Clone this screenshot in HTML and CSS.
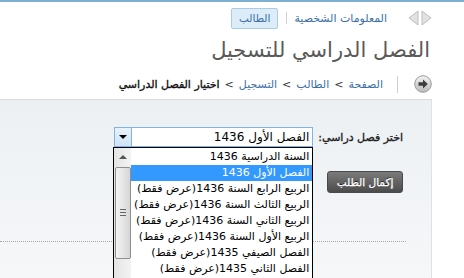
FILE: index.html
```html
<!DOCTYPE html>
<html lang="ar" dir="rtl">
<head>
  <meta charset="UTF-8">
  <title>الفصل الدراسي للتسجيل</title>
  <link rel="stylesheet" href="styles.css">
</head>
<body>
  <div class="topline"></div>
  <div class="page">
    <div class="tabs">
      <svg class="nav-arrows" width="24" height="16" viewBox="0 0 24 16">
        <polygon points="23,8 14,1 14,15" fill="#e2e2e2" stroke="#bdbdbd"/>
        <polygon points="1,8 10,1 10,15" fill="#e2e2e2" stroke="#bdbdbd"/>
      </svg>
      <a class="tab-link" href="#">المعلومات الشخصية</a>
      <span class="tab-sep"></span>
      <a class="tab active" href="#">الطالب</a>
    </div>

    <h1>الفصل الدراسي للتسجيل</h1>

    <div class="crumbs">
      <svg class="go-icon" width="18" height="18" viewBox="0 0 18 18">
        <defs>
          <linearGradient id="g" x1="0" y1="0" x2="0" y2="1">
            <stop offset="0" stop-color="#f4f4f4"/>
            <stop offset="1" stop-color="#b9b9b9"/>
          </linearGradient>
        </defs>
        <circle cx="9" cy="9" r="8.3" fill="url(#g)" stroke="#9a9a9a"/>
        <path d="M4.5 7.3h4.5V4.5l4.8 4.5-4.8 4.5v-2.8H4.5z" fill="#3c3c3c"/>
      </svg>
      <span class="crumb-sep"></span>
      <a href="#">الصفحة</a><span class="gt">&gt;</span>
      <a href="#">الطالب</a><span class="gt">&gt;</span>
      <a href="#">التسجيل</a><span class="gt">&gt;</span>
      <strong>اختيار الفصل الدراسي</strong>
    </div>

    <div class="panel">
      <div class="form-row">
        <label class="field-label">اختر فصل دراسي:</label>
        <div class="select-wrap">
          <div class="select-box">
            <span class="select-value">الفصل الأول 1436</span>
            <span class="select-btn"></span>
          </div>
          <div class="dropdown">
            <div class="scrollbar">
              <span class="sb-up"></span>
              <span class="sb-thumb"><span class="grip"></span></span>
            </div>
            <ul class="options">
              <li>السنة الدراسية 1436</li>
              <li class="selected">الفصل الأول 1436</li>
              <li>الربيع الرابع السنة 1436(عرض فقط)</li>
              <li>الربيع الثالث السنة 1436(عرض فقط)</li>
              <li>الربيع الثاني السنة 1436(عرض فقط)</li>
              <li>الربيع الأول السنة 1436(عرض فقط)</li>
              <li>الفصل الصيفي 1435(عرض فقط)</li>
              <li>الفصل الثاني 1435(عرض فقط)</li>
            </ul>
          </div>
        </div>
      </div>
      <div class="actions">
        <button class="btn-dark">إكمال الطلب</button>
      </div>
      <div class="dots"></div>
    </div>
  </div>
</body>
</html>
```

FILE: styles.css
```css
html, body {
  margin: 0;
  height: 100%;
  overflow: hidden;
}
body {
  font-family: Tahoma, "DejaVu Sans", sans-serif;
  font-size: 11px;
  color: #333;
  background: #fff;
}
a {
  color: #3b6fa6;
  text-decoration: none;
}
.topline {
  height: 2px;
  background: #7fb0d2;
}
.page {
  margin-right: 32px;
}
.tabs {
  display: flex;
  align-items: center;
  height: 20px;
  margin-top: 6px;
}
.nav-arrows {
  display: block;
}
.tab-link {
  margin-right: 21px;
  font-size: 11px;
}
.tab-sep {
  width: 1px;
  height: 12px;
  background: #cfcfcf;
  margin: 0 7px 0 8px;
}
.tab {
  display: block;
  padding: 0 7px;
  height: 19px;
  line-height: 19px;
  font-size: 10.5px;
  background: #dcecf8;
  border: 1px solid #a9cde8;
  border-radius: 2px;
}
h1 {
  margin: 8px 2px 0 0;
  font-size: 21px;
  font-weight: normal;
  color: #5a5a5a;
  line-height: 28px;
}
.crumbs {
  display: flex;
  align-items: center;
  height: 18px;
  margin-top: 11px;
}
.go-icon {
  display: block;
}
.crumb-sep {
  width: 1px;
  height: 17px;
  background: #cfcfcf;
  margin: 0 16px 0 14px;
}
.gt {
  color: #333;
  margin: 0 5px;
}
.crumbs strong {
  font-weight: normal;
  color: #111;
  -webkit-text-stroke: 0.35px #111;
}
.panel {
  margin-top: 6px;
  height: 151px;
  border-top: 1px solid #d5dbe1;
  border-right: 1px solid #dde2e7;
  background: linear-gradient(#edf0f3, #f5f7f9);
  padding: 27px 28px 0 0;
}
.form-row {
  display: flex;
  align-items: center;
}
.field-label {
  color: #222;
  -webkit-text-stroke: 0.35px #222;
  margin-left: 5px;
}
.select-wrap {
  position: relative;
  width: 199px;
}
.select-box {
  display: flex;
  align-items: center;
  height: 18px;
  border: 1px solid #7eb4ea;
  background: #fff;
}
.select-value {
  flex: 1;
  padding-right: 3px;
  font-size: 12px;
  color: #000;
}
.select-btn {
  width: 16px;
  height: 18px;
  border-right: 1px solid #7eb4ea;
  background: linear-gradient(#e8f2fb, #cfe3f5);
  position: relative;
}
.select-btn::after {
  content: "";
  position: absolute;
  left: 4px;
  top: 7px;
  border-top: 4px solid #000;
  border-left: 4px solid transparent;
  border-right: 4px solid transparent;
}
.dropdown {
  position: absolute;
  top: 20px;
  right: 0;
  left: -1px;
  height: 131px;
  display: flex;
  background: #fff;
  border: 1px solid #000;
  border-bottom: none;
}
.scrollbar {
  order: 2;
  flex: none;
  width: 17px;
  background: linear-gradient(to right, #e4e4e4, #f3f3f3);
  position: relative;
}
.sb-up {
  position: absolute;
  top: 7px;
  left: 5px;
  border-bottom: 4px solid #555;
  border-left: 4px solid transparent;
  border-right: 4px solid transparent;
}
.sb-thumb {
  position: absolute;
  top: 19px;
  left: 1px;
  width: 14px;
  height: 90px;
  border: 1px solid #8f8f8f;
  border-radius: 2px;
  background: linear-gradient(to right, #f4f4f4, #d6d6d6);
}
.grip {
  position: absolute;
  top: 41px;
  left: 4px;
  width: 6px;
  height: 5px;
  border-top: 1px solid #666;
  border-bottom: 1px solid #666;
}
.grip::after {
  content: "";
  position: absolute;
  top: 2px;
  left: 0;
  width: 6px;
  border-top: 1px solid #666;
}
.options {
  list-style: none;
  margin: 1px 0 0;
  padding: 0;
  flex: 1;
  min-width: 0;
  overflow: hidden;
}
.options li {
  height: 16px;
  line-height: 16px;
  padding-right: 3px;
  font-size: 11px;
  color: #000;
  white-space: nowrap;
}
.options li.selected {
  background: #3399ff;
  color: #fff;
}
.actions {
  margin-top: 24px;
}
.btn-dark {
  width: 76px;
  height: 22px;
  font-family: inherit;
  font-size: 10.5px;
  color: #fff;
  -webkit-text-stroke: 0.3px #fff;
  text-shadow: 0 -1px 0 #222;
  border: 1px solid #4a4a4a;
  border-radius: 3px;
  background: linear-gradient(#7b7b7b, #4b4b4b);
  padding: 0;
}
.dots {
  margin-top: 48px;
  margin-right: -3px;
  border-top: 1px dotted #a8a8a8;
}
```
